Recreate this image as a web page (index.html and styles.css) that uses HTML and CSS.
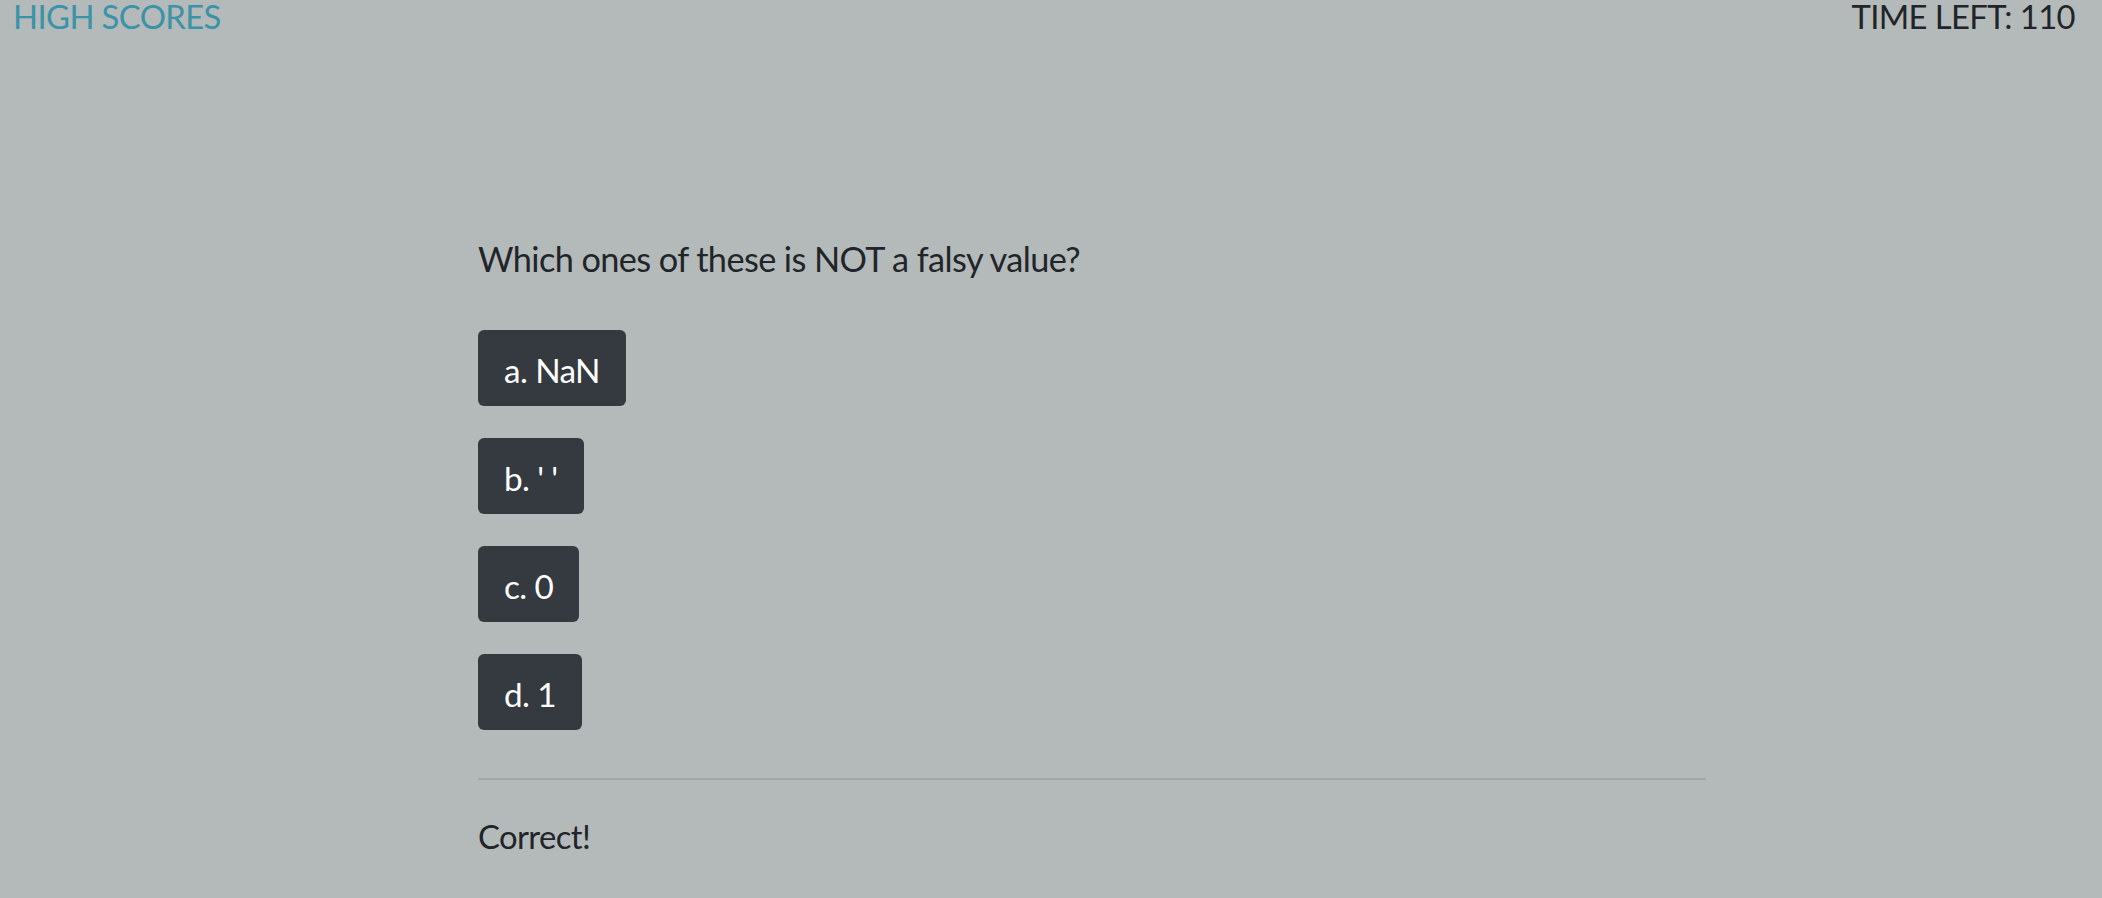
FILE: index.html
```html
<!DOCTYPE html>
<html lang="en">
<head>
<meta charset="utf-8">
<title>Quiz</title>
<link rel="stylesheet" href="styles.css">
</head>
<body>
<header class="topbar">
  <a class="scores-link" href="#">HIGH SCORES</a>
  <div class="timer">TIME LEFT: <span>110</span></div>
</header>
<main class="quiz">
  <h2 class="question">Which ones of these is NOT a falsy value?</h2>
  <div class="choices">
    <button class="choice">a. NaN</button>
    <button class="choice">b. ' '</button>
    <button class="choice">c. 0</button>
    <button class="choice">d. 1</button>
  </div>
  <hr class="divider">
  <p class="result">Correct!</p>
</main>
</body>
</html>
```
FILE: styles.css
```css
html, body {
  margin: 0;
  padding: 0;
}
body {
  background: #b4b9b9;
  color: #212529;
  font-family: Lato, "Noto Sans", sans-serif;
  font-size: 32.8px;
  letter-spacing: -0.6px;
  height: 898px;
  overflow: hidden;
}
.topbar {
  display: flex;
  justify-content: space-between;
  align-items: flex-start;
  padding: 0 27px 0 13px;
  height: 34px;
  line-height: 34px;
}
.scores-link {
  color: #3b93a8;
  text-decoration: none;
}
.timer {
  color: #212529;
}
.quiz {
  width: 1228px;
  margin: 199px 0 0 478px;
}
.question {
  margin: 0;
  font-size: 34.3px;
  font-weight: 400;
  line-height: 52px;
}
.choices {
  display: flex;
  flex-direction: column;
  align-items: flex-start;
  gap: 32px;
  margin-top: 45px;
}
.choice {
  font-family: inherit;
  font-size: 33.3px;
  letter-spacing: -0.6px;
  line-height: 50px;
  padding: 15px 26px 11px;
  border: 0;
  border-radius: 6px;
  background: #343a40;
  color: #ffffff;
  cursor: pointer;
}
.divider {
  margin: 48px 0 32px;
  border: 0;
  border-top: 2px solid rgba(0, 0, 0, 0.1);
  height: 0;
}
.result {
  margin: 0;
  line-height: 50px;
}
```
